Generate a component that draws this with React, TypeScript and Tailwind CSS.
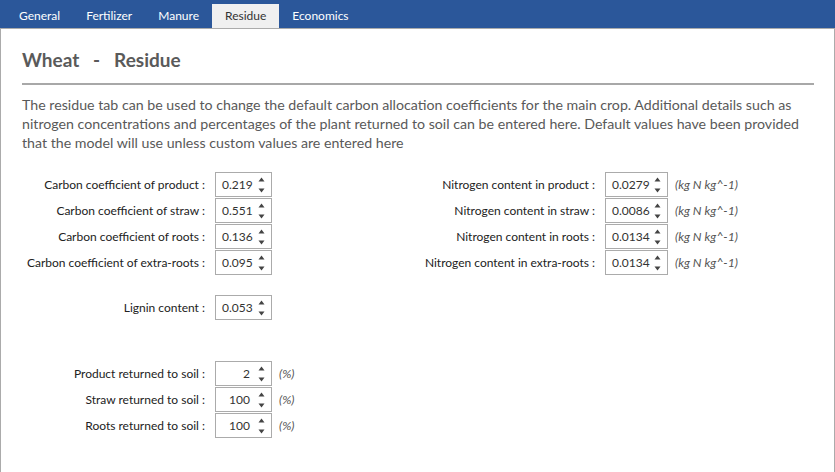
import React from "react";

const Spin = () => (
  <svg width="7" height="18" viewBox="0 0 7 18" className="shrink-0">
    <path d="M3.5 1.5 L6.5 5.5 L0.5 5.5 Z" fill="#444" />
    <path d="M0.5 12.5 L6.5 12.5 L3.5 16.5 Z" fill="#444" />
  </svg>
);

const Box = ({ value, w, right }: { value: string; w: string; right?: boolean }) => (
  <div className={`${w} h-[25px] mb-[1px] border border-[#ababab] bg-white flex items-center pl-[6px] pr-[6px] text-[12px] text-[#333]`}>
    <span className={right ? "flex-1 text-right pr-[8px]" : "flex-1"}>{value}</span>
    <Spin />
  </div>
);

const Row = ({ label, value, labelW, boxW, unit, right }: { label: string; value: string; labelW: string; boxW: string; unit?: string; right?: boolean }) => (
  <div className="flex items-center">
    <div className={`${labelW} whitespace-nowrap text-right text-[12px] text-[#222] pr-[10px]`}>{label}</div>
    <Box value={value} w={boxW} right={right} />
    {unit && <div className="pl-[7px] whitespace-nowrap text-[12.3px] italic text-[#555]">{unit}</div>}
  </div>
);

export default function App() {
  const tabs = ["General", "Fertilizer", "Manure", "Residue", "Economics"];
  return (
    <div className="w-[835px] h-[472px] overflow-hidden flex flex-col bg-white" style={{ fontFamily: "Lato, 'Noto Sans', sans-serif" }}>
      <div className="h-[28px] bg-[#2b579a] flex items-end pl-[6px] shrink-0">
        {tabs.map((t) => (
          <div
            key={t}
            className={
              t === "Residue"
                ? "h-[24px] px-[13px] flex items-center text-[12px] bg-[#f0f0f0] text-[#333]"
                : "h-[24px] px-[13px] flex items-center text-[12px] text-white"
            }
          >
            {t}
          </div>
        ))}
      </div>
      <div className="flex-1 border-t border-l border-r border-[#ababab] pl-[21px] pr-[20px]">
        <div className="pt-[19px] text-[19px] font-bold text-[#5a5a5a] leading-[24px] whitespace-pre">Wheat   -   Residue</div>
        <div className="mt-[11px] h-[2px] bg-[#a8a8a8]" />
        <p className="mt-[10px] text-[14.2px] leading-[19px] text-[#595959]">
          The residue tab can be used to change the default carbon allocation coefficients for the main crop. Additional details such as nitrogen concentrations and percentages of the plant returned to soil can be entered here. Default values have been provided that the model will use unless custom values are entered here
        </p>
        <div className="mt-[20px] flex">
          <div className="w-[373px]">
            <Row label="Carbon coefficient of product :" value="0.219" labelW="w-[193px]" boxW="w-[57px]" />
            <Row label="Carbon coefficient of straw :" value="0.551" labelW="w-[193px]" boxW="w-[57px]" />
            <Row label="Carbon coefficient of roots :" value="0.136" labelW="w-[193px]" boxW="w-[57px]" />
            <Row label="Carbon coefficient of extra-roots :" value="0.095" labelW="w-[193px]" boxW="w-[57px]" />
            <div className="mt-[19px]">
              <Row label="Lignin content :" value="0.053" labelW="w-[193px]" boxW="w-[57px]" />
            </div>
            <div className="mt-[40px]">
              <Row label="Product returned to soil :" value="2" labelW="w-[193px]" boxW="w-[57px]" unit="(%)" right />
              <Row label="Straw returned to soil :" value="100" labelW="w-[193px]" boxW="w-[57px]" unit="(%)" right />
              <Row label="Roots returned to soil :" value="100" labelW="w-[193px]" boxW="w-[57px]" unit="(%)" right />
            </div>
          </div>
          <div>
            <Row label="Nitrogen content in product :" value="0.0279" labelW="w-[210px]" boxW="w-[63px]" unit="(kg N kg^-1)" />
            <Row label="Nitrogen content in straw :" value="0.0086" labelW="w-[210px]" boxW="w-[63px]" unit="(kg N kg^-1)" />
            <Row label="Nitrogen content in roots :" value="0.0134" labelW="w-[210px]" boxW="w-[63px]" unit="(kg N kg^-1)" />
            <Row label="Nitrogen content in extra-roots :" value="0.0134" labelW="w-[210px]" boxW="w-[63px]" unit="(kg N kg^-1)" />
          </div>
        </div>
      </div>
    </div>
  );
}
